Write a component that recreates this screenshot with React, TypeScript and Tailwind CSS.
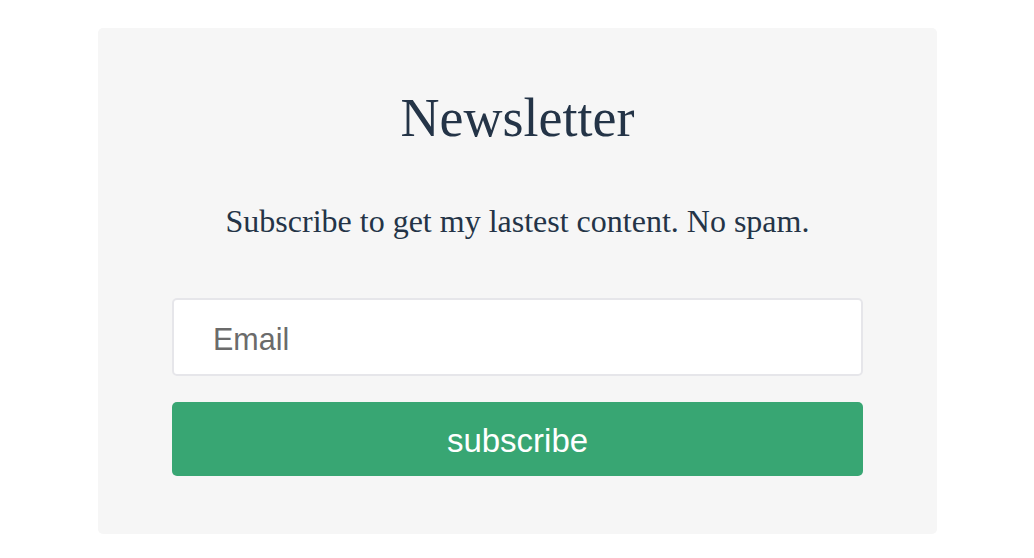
export default function App() {
  return (
    <div className="w-full min-h-[558px] bg-white pt-[28px]">
      <div className="ml-[98px] w-[839px] rounded-[5px] bg-[#f6f6f6] px-[74px] pt-[60px] pb-[58px] flex flex-col">
        <h1 className="text-center text-[54px] leading-[60px] text-[#243447] font-['Liberation_Serif',serif]">
          Newsletter
        </h1>
        <p className="mt-[53px] text-center text-[32px] leading-[40px] text-[#243447] font-['Liberation_Serif',serif]">
          Subscribe to get my lastest content. No spam.
        </p>
        <input
          type="email"
          placeholder="Email"
          className="mt-[57px] h-[78px] w-full rounded-[5px] border-2 border-[#e6e6ea] bg-white pl-[39px] pt-[5px] text-[30.5px] text-[#333] placeholder:text-[#6b6b6b] outline-none font-['Liberation_Sans',Arial,sans-serif]"
        />
        <button className="mt-[26px] h-[74px] w-full rounded-[5px] bg-[#38a673] pt-[4px] text-white text-[33px] font-['Liberation_Sans',Arial,sans-serif]">
          subscribe
        </button>
      </div>
    </div>
  );
}
